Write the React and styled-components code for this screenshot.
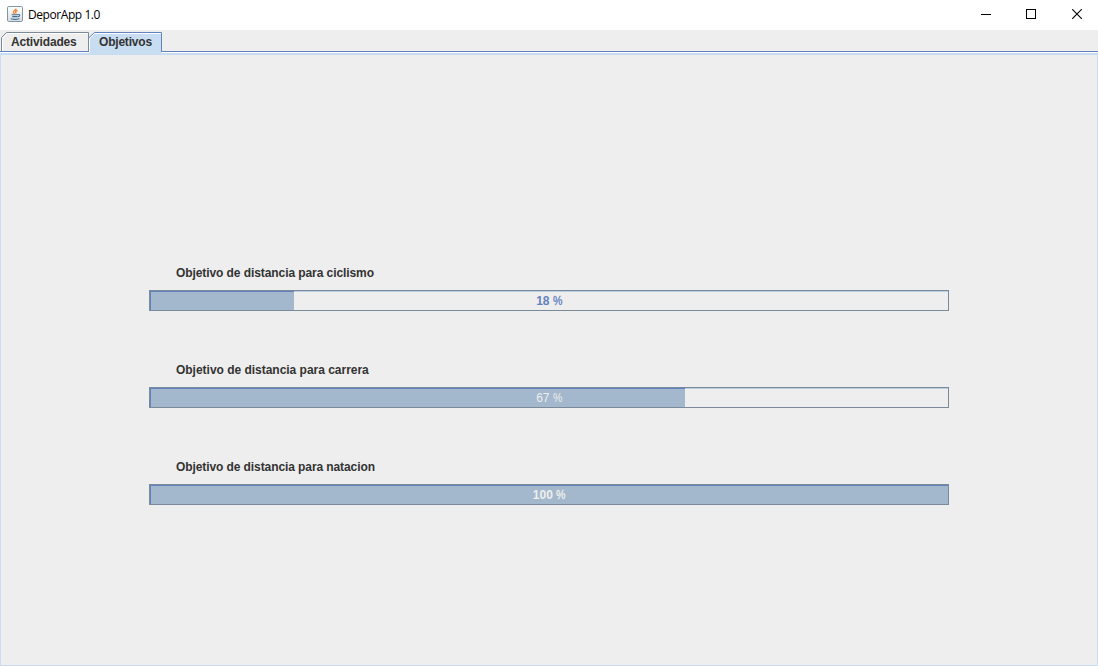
import React from "react";
import styled, { createGlobalStyle } from "styled-components";

const GlobalStyle = createGlobalStyle`
  * { box-sizing: border-box; }
  html, body { margin: 0; height: 100%; overflow: hidden; }
`;

const Window = styled.div`
  width: 1098px;
  height: 666px;
  display: flex;
  flex-direction: column;
  background: #eeeeee;
  font: bold 12px/14px "Liberation Sans", Arial, sans-serif;
  color: #333333;
`;

const TitleBar = styled.header`
  flex: none;
  height: 30px;
  display: flex;
  align-items: center;
  background: #ffffff;
  padding-left: 7px;
`;

const AppIcon = styled.svg`
  margin-top: -2px;
`;

const Title = styled.h1`
  margin: 0 auto 0 5px;
  font: 400 12px/16px "Open Sans", "Noto Sans", sans-serif;
  letter-spacing: -0.43px;
  color: #000000;
`;

const Controls = styled.div`
  display: flex;
`;

const ControlButton = styled.button`
  width: ${(p) => p.$width}px;
  height: 30px;
  padding: 9px 0 0 ${(p) => p.$inset}px;
  border: 0;
  background: transparent;
  display: flex;
  align-items: flex-start;
`;

const TabStrip = styled.nav`
  flex: none;
  height: 22px;
  display: flex;
  padding: 2px 0 0 1px;
  border-bottom: 1px solid #6382bf;
`;

const Tab = styled.div`
  position: relative;
  z-index: 1;
  width: ${(p) => p.$width}px;
  height: ${(p) => (p.$active ? 21 : 19)}px;
  display: grid;
  & > * { grid-area: 1 / 1; }
`;

const TabLabel = styled.span`
  padding: 3px 0 0 ${(p) => p.$inset}px;
  white-space: nowrap;
  letter-spacing: ${(p) => p.$spacing}px;
`;

const Panel = styled.main`
  flex: 1;
  margin-top: 1px;
  border: 1px solid #c8ddf2;
  border-top-width: 2px;
  box-shadow: 0 -1px 0 #ffffff;
  display: flex;
  flex-direction: column;
  gap: 52px;
  padding: 211px 148px 0;
`;

const Goal = styled.section`
  display: flex;
  flex-direction: column;
  gap: 10px;
`;

const GoalLabel = styled.div`
  padding-left: 27px;
  height: 14px;
  white-space: nowrap;
  letter-spacing: ${(p) => p.$spacing}px;
`;

const Track = styled.div`
  width: 800px;
  height: 21px;
  border: 1px solid #7a8a99;
  display: grid;
  background: linear-gradient(#b8cfe5 1px, #eeeeee 1px);
  & > * { grid-area: 1 / 1; }
`;

const Fill = styled.div`
  background: #a3b8cc;
  border-top: 1px solid #6382bf;
  border-left: 1px solid #6382bf;
`;

const Percent = styled.span`
  place-self: center;
  padding-top: 1px;
  font-weight: ${(p) => (p.$light ? 400 : 700)};
  color: ${(p) => (p.$value < 50 ? "#6382bf" : "#eeeeee")};
`;

const PercentSign = styled.span`
  display: inline-block;
  width: 9px;
  font-weight: 400;
  -webkit-text-stroke: ${(p) => (p.$light ? 0 : 0.3)}px currentColor;
  transform: scaleX(0.88);
  transform-origin: left;
`;

const JavaIcon = () => (
  <AppIcon width="16" height="16" viewBox="0 0 16 16">
    <defs>
      <linearGradient id="tile" x1="0" y1="0" x2="0" y2="1">
        <stop offset="0" stopColor="#ffffff" />
        <stop offset="1" stopColor="#d5dde3" />
      </linearGradient>
    </defs>
    <rect x=".5" y=".5" width="15" height="15" rx="1.3" fill="url(#tile)" stroke="#8496a3" />
    <path d="M9.2 2.6C9 4 6 4.6 6.4 6.2c.2.6.8.9 1 1.5M10.6 4.4C9 5 8.2 5.6 8.7 6.4c.3.5.2.8-.1 1.2" fill="none" stroke="#ee7f2d" strokeWidth="1.3" />
    <path d="M4.6 8.7h6.2M5.2 10.6h5M3.8 12.7c2 .7 6.2.7 8.6 0M10.8 8.6c2.8-.5 2.5 1.9-.3 2.3" fill="none" stroke="#456f90" strokeWidth="1.1" />
  </AppIcon>
);

const goals = [
  { name: "ciclismo", value: 18, width: 144, spacing: -0.08 },
  { name: "carrera", value: 67, width: 535, spacing: -0.02, light: true },
  { name: "natacion", value: 100, width: 798, spacing: -0.09 },
];

export default function App() {
  return (
    <>
      <GlobalStyle />
      <Window>
        <TitleBar>
          <JavaIcon />
          <Title>DeporApp 1.0</Title>
          <Controls>
            <ControlButton $width={46} $inset={17} aria-label="Minimizar">
              <svg width="12" height="12" shapeRendering="crispEdges"><path d="M1 5.5h10" stroke="#000" /></svg>
            </ControlButton>
            <ControlButton $width={46} $inset={17} aria-label="Maximizar">
              <svg width="12" height="12" shapeRendering="crispEdges"><rect x=".5" y=".5" width="9" height="9" fill="none" stroke="#000" /></svg>
            </ControlButton>
            <ControlButton $width={43} $inset={17} aria-label="Cerrar">
              <svg width="12" height="12"><path d="M.2.2l9.6 9.6M9.8.2L.2 9.8" stroke="#000" strokeWidth="1.1" /></svg>
            </ControlButton>
          </Controls>
        </TitleBar>
        <TabStrip>
          <Tab $width={88}>
            <svg width="88" height="19">
              <path d="M1.5 19V6.5L6.5 1.5H87" fill="none" stroke="#fff" />
              <path d="M.5 19V5.5L5.5 .5H87.5V19" fill="none" stroke="#7a8a99" />
            </svg>
            <TabLabel $inset={10} $spacing={-0.16}>Actividades</TabLabel>
          </Tab>
          <Tab $width={73} $active>
            <svg width="73" height="21">
              <path d="M0 21V5.5L5.5 .5H72.5V21Z" fill="#c8ddf2" />
              <path d="M.5 20V6.5L5.5 1.5H72" fill="none" stroke="#fff" />
              <path d="M0 5.5L5.5 .5H72.5V20" fill="none" stroke="#6382bf" />
            </svg>
            <TabLabel $inset={10} $spacing={-0.2}>Objetivos</TabLabel>
          </Tab>
        </TabStrip>
        <Panel>
          {goals.map((g) => (
            <Goal key={g.name}>
              <GoalLabel $spacing={g.spacing}>Objetivo de distancia para {g.name}</GoalLabel>
              <Track>
                <Fill style={{ width: g.width }} />
                <Percent $value={g.value} $light={g.light}>
                  {g.value} <PercentSign $light={g.light}>%</PercentSign>
                </Percent>
              </Track>
            </Goal>
          ))}
        </Panel>
      </Window>
    </>
  );
}
